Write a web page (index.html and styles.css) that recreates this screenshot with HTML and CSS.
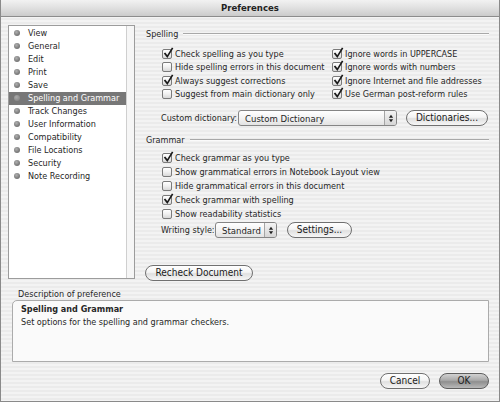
FILE: index.html
```html
<!DOCTYPE html>
<html>
<head>
<meta charset="utf-8">
<title>Preferences</title>
<link rel="stylesheet" href="styles.css">
</head>
<body>
<div class="window">
  <div class="titlebar">Preferences</div>
  <div class="content">
    <div class="top">
      <div class="list">
        <ul class="items">
          <li><i class="dot"></i>View</li>
          <li><i class="dot"></i>General</li>
          <li><i class="dot"></i>Edit</li>
          <li><i class="dot"></i>Print</li>
          <li><i class="dot"></i>Save</li>
          <li class="sel"><i class="dot"></i>Spelling and Grammar</li>
          <li><i class="dot"></i>Track Changes</li>
          <li><i class="dot"></i>User Information</li>
          <li><i class="dot"></i>Compatibility</li>
          <li><i class="dot"></i>File Locations</li>
          <li><i class="dot"></i>Security</li>
          <li><i class="dot"></i>Note Recording</li>
        </ul>
        <div class="scroll"></div>
      </div>
      <div class="panel">
        <div class="head"><span>Spelling</span><i class="rule"></i></div>
        <div class="checks two">
          <label class="cb"><span class="box"><svg viewBox="0 0 10 10"><path d="M2 4.6 L4.3 7.6 L9.2 -0.4" /></svg></span>Check spelling as you type</label>
          <label class="cb"><span class="box"><svg viewBox="0 0 10 10"><path d="M2 4.6 L4.3 7.6 L9.2 -0.4" /></svg></span>Ignore words in UPPERCASE</label>
          <label class="cb"><span class="box"></span>Hide spelling errors in this document</label>
          <label class="cb"><span class="box"><svg viewBox="0 0 10 10"><path d="M2 4.6 L4.3 7.6 L9.2 -0.4" /></svg></span>Ignore words with numbers</label>
          <label class="cb"><span class="box"><svg viewBox="0 0 10 10"><path d="M2 4.6 L4.3 7.6 L9.2 -0.4" /></svg></span>Always suggest corrections</label>
          <label class="cb"><span class="box"><svg viewBox="0 0 10 10"><path d="M2 4.6 L4.3 7.6 L9.2 -0.4" /></svg></span>Ignore Internet and file addresses</label>
          <label class="cb"><span class="box"></span>Suggest from main dictionary only</label>
          <label class="cb"><span class="box"><svg viewBox="0 0 10 10"><path d="M2 4.6 L4.3 7.6 L9.2 -0.4" /></svg></span>Use German post-reform rules</label>
        </div>
        <div class="row dict">
          <span class="lbl lbl-dict">Custom dictionary:</span>
          <div class="popup popup-dict"><span class="val">Custom Dictionary</span><span class="arrows"><svg viewBox="0 0 7 10"><path d="M3.5 0.5 L6 4 L1 4 Z M3.5 9.5 L6 6 L1 6 Z"/></svg></span></div>
          <button class="btn btn-dict">Dictionaries...</button>
        </div>
        <div class="head grammar"><span>Grammar</span><i class="rule"></i></div>
        <div class="checks one">
          <label class="cb"><span class="box"><svg viewBox="0 0 10 10"><path d="M2 4.6 L4.3 7.6 L9.2 -0.4" /></svg></span>Check grammar as you type</label>
          <label class="cb"><span class="box"></span>Show grammatical errors in Notebook Layout view</label>
          <label class="cb"><span class="box"></span>Hide grammatical errors in this document</label>
          <label class="cb"><span class="box"><svg viewBox="0 0 10 10"><path d="M2 4.6 L4.3 7.6 L9.2 -0.4" /></svg></span>Check grammar with spelling</label>
          <label class="cb"><span class="box"></span>Show readability statistics</label>
        </div>
        <div class="row style">
          <span class="lbl lbl-style">Writing style:</span>
          <div class="popup popup-style"><span class="val">Standard</span><span class="arrows"><svg viewBox="0 0 7 10"><path d="M3.5 0.5 L6 4 L1 4 Z M3.5 9.5 L6 6 L1 6 Z"/></svg></span></div>
          <button class="btn btn-settings">Settings...</button>
        </div>
        <button class="btn btn-recheck">Recheck Document</button>
      </div>
    </div>
    <div class="desc-label">Description of preference</div>
    <div class="desc">
      <div class="desc-title">Spelling and Grammar</div>
      <div class="desc-text">Set options for the spelling and grammar checkers.</div>
    </div>
    <div class="actions">
      <button class="btn btn-cancel">Cancel</button>
      <button class="btn btn-ok">OK</button>
    </div>
  </div>
</div>
</body>
</html>
```

FILE: styles.css
```css
* { box-sizing: border-box; margin: 0; padding: 0; }
html, body { width: 500px; height: 402px; overflow: hidden; }
body {
  font-family: "DejaVu Sans Condensed", "DejaVu Sans", sans-serif;
  font-stretch: condensed;
  font-size: 9px;
  color: #262626;
  background: #fff;
}
.window {
  width: 500px;
  height: 402px;
  border: 1px solid #8a8a8a;
  border-top: none;
  background: repeating-linear-gradient(to bottom, #f3f3f3 0, #f3f3f3 2px, #ebebeb 2px, #ebebeb 4px);
  display: flex;
  flex-direction: column;
}
.titlebar {
  height: 17px;
  border-bottom: 1px solid #8c8c8c;
  background: linear-gradient(to bottom, #f2f2f2 0%, #e0e0e0 50%, #cbcbcb 100%);
  text-align: center;
  font-weight: bold;
  font-size: 9.5px;
  line-height: 16px;
  color: #222;
}
.content {
  padding: 8px 9px 0 7px;
  display: flex;
  flex-direction: column;
}
.top { display: flex; gap: 11px; align-items: flex-start; }
.list {
  width: 127px;
  height: 254px;
  border: 1px solid #9c9c9c;
  background: #fff;
  display: flex;
}
.items { list-style: none; flex: 1; padding-top: 0.5px; }
.items li {
  height: 13px;
  display: flex;
  align-items: center;
  padding-left: 5px;
  gap: 8px;
  white-space: nowrap;
}
.items li.sel { background: #777777; color: #fff; }
.dot {
  width: 6px; height: 6px; border-radius: 50%;
  background: radial-gradient(circle at 40% 35%, #b0b0b0 0, #7c7c7c 60%, #666 100%);
  flex: none;
}
.items li.sel .dot { background: radial-gradient(circle at 40% 35%, #aaa 0, #8a8a8a 70%); }
.scroll { width: 8px; border-left: 1px solid #cfcfcf; background: #f6f6f6; }

.panel { width: 344px; margin-top: 3px; display: flex; flex-direction: column; }
.head { height: 12px; display: flex; align-items: center; gap: 5px; }
.head .rule { flex: 1; height: 2px; border-top: 1px solid #a8a8a8; border-bottom: 1px solid #fbfbfb; margin-right: 1px; }
.head.grammar { margin-top: 8px; }

.checks { padding-left: 16px; display: grid; }
.checks.two { margin-top: 7px; grid-template-columns: 170px 1fr; grid-auto-rows: 13.5px; }
.checks.one { margin-top: 5px; grid-auto-rows: 14px; }
.cb { display: flex; align-items: center; gap: 3px; white-space: nowrap; }
.box {
  width: 10px; height: 10px; flex: none;
  border: 1px solid #7a7a7a;
  border-radius: 2px;
  background: linear-gradient(to bottom, #ffffff 0%, #f0f0f0 50%, #d8d8d8 100%);
  display: flex;
}
.box svg { width: 10px; height: 10px; overflow: visible; margin: -1px 0 0 -0.5px; }
.box path { fill: none; stroke: #1a1a1a; stroke-width: 1.7; stroke-linecap: square; }

.row { display: flex; align-items: center; height: 16px; padding-left: 15px; }
.row.dict { margin-top: 9px; }
.row.style { margin-top: 1px; }
.lbl { white-space: nowrap; }
.lbl-dict { width: 77px; }
.lbl-style { width: 54px; }
.popup {
  height: 16px;
  border: 1px solid #858585;
  border-radius: 3px;
  background: linear-gradient(to bottom, #ffffff 0%, #f3f3f3 50%, #e3e3e3 100%);
  display: flex;
  align-items: center;
  font-size: 9.5px;
}
.popup .val { flex: 1; padding-left: 6px; white-space: nowrap; }
.popup .arrows {
  width: 12px; height: 14px;
  border-left: 1px solid #a5a5a5;
  display: flex; align-items: center; justify-content: center;
  background: linear-gradient(to bottom, #f4f4f4, #d6d6d6);
  border-radius: 0 2px 2px 0;
}
.popup .arrows svg { width: 6px; height: 9px; }
.popup .arrows path { fill: #222; }
.popup-dict { width: 159px; }
.popup-style { width: 62px; }

.btn {
  font-family: "DejaVu Sans Condensed", "DejaVu Sans", sans-serif;
  font-stretch: condensed;
  font-size: 10px;
  color: #1a1a1a;
  height: 16px;
  line-height: 14px;
  border: 1px solid #707070;
  border-radius: 8px;
  background: linear-gradient(to bottom, #ffffff 0%, #f4f4f4 45%, #e0e0e0 55%, #f6f6f6 100%);
  text-align: center;
  padding: 0;
  white-space: nowrap;
}
.btn-dict { width: 82px; margin-left: 9px; }
.btn-settings { width: 65px; margin-left: 10px; }
.btn-recheck { width: 108px; margin-top: 27px; margin-left: -1px; }

.desc-label { margin-top: 7px; height: 12px; line-height: 12px; padding-left: 10px; }
.desc {
  margin-left: 4px;
  margin-right: 1px;
  height: 62px;
  border: 1px solid #ababab;
  border-radius: 5px 0 0 0;
  background: #fafafa;
  padding: 2px 8px;
  line-height: 13px;
}
.desc-title { font-weight: bold; }
.actions { margin-top: 11px; display: flex; justify-content: flex-end; gap: 9px; padding-right: 1px; }
.btn-cancel { width: 50px; }
.btn-ok {
  width: 50px;
  border-color: #5e5e5e;
  background: linear-gradient(to bottom, #d2d2d2 0%, #a9a9a9 45%, #8f8f8f 55%, #b9b9b9 100%);
}
```
